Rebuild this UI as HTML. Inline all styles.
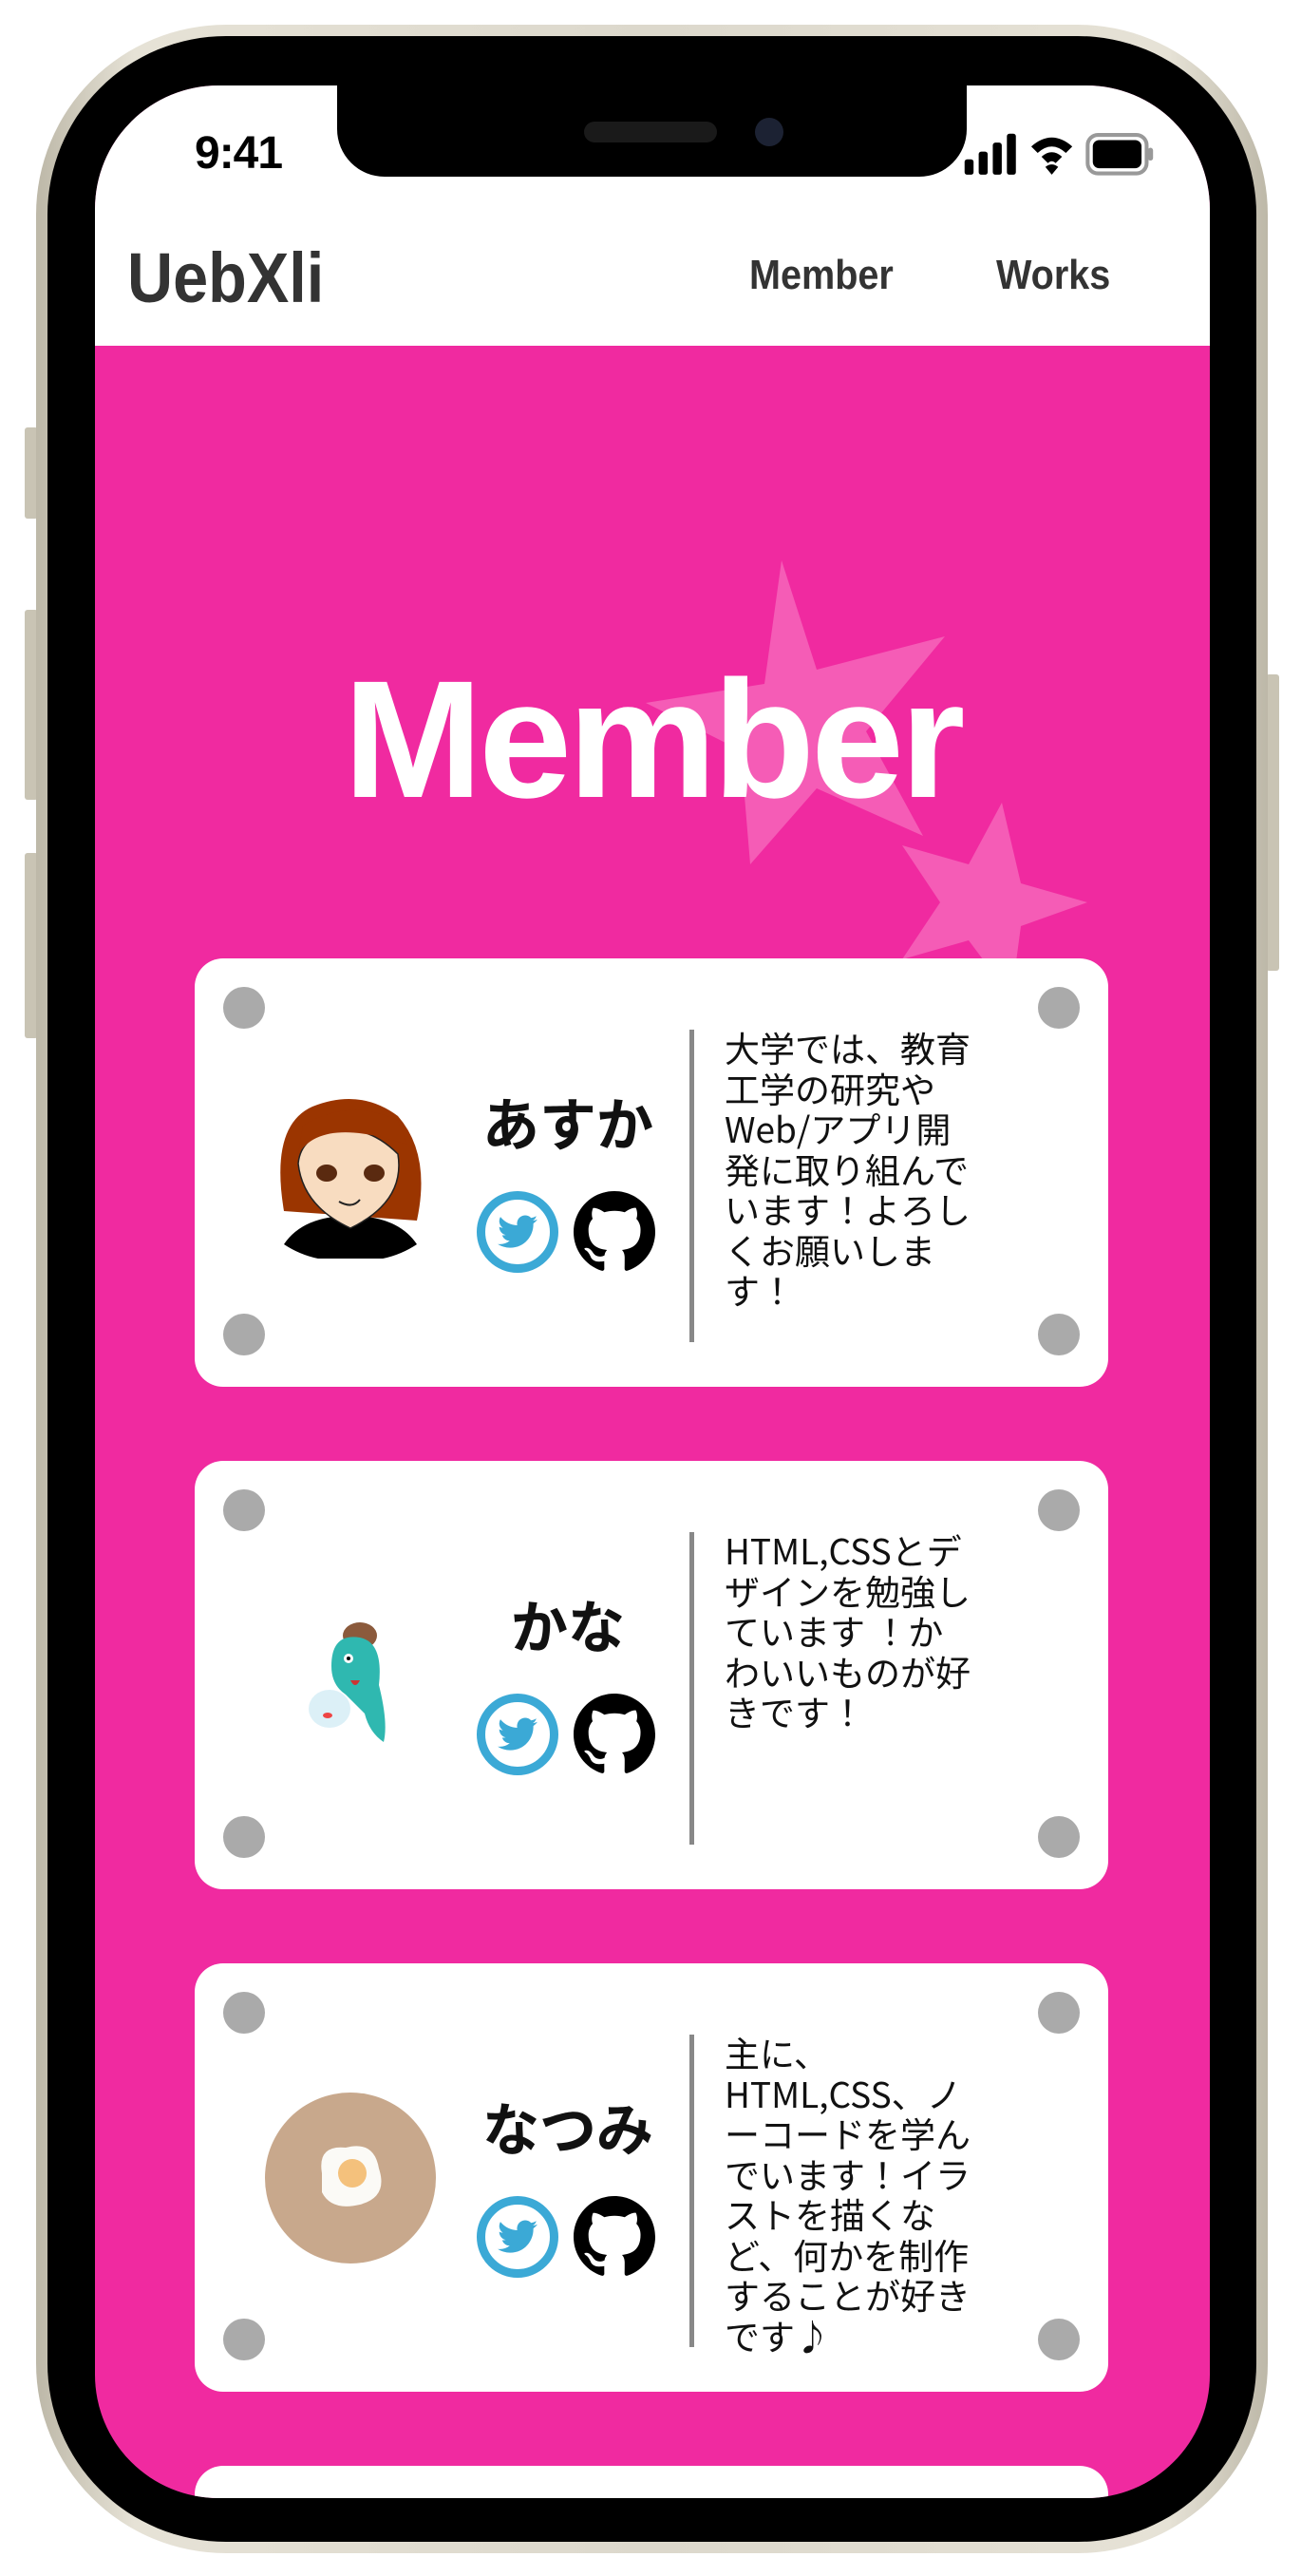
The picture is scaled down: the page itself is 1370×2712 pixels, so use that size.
<!DOCTYPE html>
<html><head><meta charset="utf-8">
<style>
*{margin:0;padding:0;box-sizing:border-box}
html,body{width:1370px;height:2712px;background:#fff;overflow:hidden;font-family:"Liberation Sans","Noto Sans CJK JP",sans-serif}
.frame{position:absolute;left:38px;top:26px;width:1297px;height:2662px;border-radius:200px;background:linear-gradient(90deg,#bdb8a8,#e6e2d6 8%,#dcd8cc 50%,#e6e2d6 92%,#bdb8a8);}
.bezel{position:absolute;left:50px;top:38px;width:1273px;height:2638px;border-radius:188px;background:#000}
.screen{position:absolute;left:100px;top:90px;width:1174px;height:2540px;border-radius:130px;overflow:hidden;background:#F02AA0}
.btn{position:absolute;background:#c9c4b4;border-radius:3px}
.header{position:absolute;left:0;top:0;width:1174px;height:274px;background:#fff}
.notch{position:absolute;left:255px;top:0;width:663px;height:96px;background:#000;border-radius:0 0 50px 50px}
.time{position:absolute;left:105px;top:44px;font-size:48px;font-weight:bold;color:#000;letter-spacing:-1px}
.logo{position:absolute;left:34px;top:160px;font-family:"Liberation Sans Narrow","Liberation Sans",sans-serif;font-weight:bold;font-size:74px;color:#333;transform:scaleX(.9);transform-origin:left}
.nav{position:absolute;top:175px;font-family:"Liberation Sans Narrow","Liberation Sans",sans-serif;font-weight:bold;font-size:44px;color:#333;transform:scaleX(.9);transform-origin:left}
.title{position:absolute;left:0;width:1174px;top:588px;text-align:center;font-size:176px;font-weight:bold;color:#fff;letter-spacing:-4px}
.card{position:absolute;left:105px;width:962px;height:451px;background:#fff;border-radius:30px}
.dot{position:absolute;width:44px;height:44px;border-radius:50%;background:#aaa}
.name{position:absolute;left:300px;width:186px;text-align:center;top:128px;font-size:60px;font-weight:bold;color:#111;font-family:"Noto Sans CJK JP",sans-serif}
.tw{position:absolute;left:297px;top:245px;width:86px;height:86px;border-radius:50%;border:9px solid #3BA9D6;display:flex;align-items:center;justify-content:center}
.gh{position:absolute;left:399px;top:245px;width:86px;height:86px}
.line{position:absolute;left:521px;top:75px;width:5px;height:329px;background:#888}
.txt{position:absolute;left:558px;top:72px;width:272px;font-size:37px;line-height:42.5px;color:#111;font-family:"Noto Sans CJK JP",sans-serif}
.av{position:absolute;left:74px;top:136px;width:180px;height:180px}
</style></head><body>
<div class="btn" style="left:26px;top:450px;width:14px;height:96px"></div>
<div class="btn" style="left:26px;top:642px;width:14px;height:200px"></div>
<div class="btn" style="left:26px;top:898px;width:14px;height:195px"></div>
<div class="btn" style="left:1333px;top:710px;width:14px;height:312px"></div>
<div class="frame"></div>
<div class="bezel"></div>
<div class="screen">
  <svg style="position:absolute;left:0;top:0" width="1174" height="1100">
    <polygon fill="#F55CB6" points="723,500 760,615 895,580 812,680 872,790 760,740 690,820 680,700 580,650 705,630" />
    <polygon fill="#F55CB6" points="955,755 975,840 1045,860 975,885 965,960 920,900 850,920 890,860 850,800 920,820" />
  </svg>
  <div class="header">
    <div class="time">9:41</div>
    <svg style="position:absolute;left:915px;top:48px" width="204" height="54" viewBox="0 0 150 40">
      <rect x="0" y="22" width="7" height="12" rx="2"/><rect x="11" y="16" width="7" height="18" rx="2"/><rect x="22" y="9" width="7" height="25" rx="2"/><rect x="33" y="2" width="7" height="32" rx="2"/>
      <path d="M52 12 Q68 -2 84 12 L79 17 Q68 7 57 17Z M60 20 Q68 13 76 20 L71 25 Q68 22 65 25Z M68 34 L63 28 Q68 24 73 28Z"/>
      <rect x="96" y="3" width="46" height="30" rx="8" fill="none" stroke="#999" stroke-width="3"/><rect x="100" y="7" width="38" height="22" rx="5"/><rect x="143" y="13" width="4" height="10" rx="2" fill="#999"/>
    </svg>
    <div class="notch"><div style="position:absolute;left:260px;top:38px;width:140px;height:22px;border-radius:11px;background:#1a1a1a"></div><div style="position:absolute;left:440px;top:34px;width:30px;height:30px;border-radius:50%;background:#1c2233"></div></div>
    <div class="logo">UebXli</div>
    <div class="nav" style="left:689px">Member</div>
    <div class="nav" style="left:949px">Works</div>
  </div>
  <div class="title">Member</div>

  <!-- card 1 -->
  <div class="card" style="top:919px">
    <div class="dot" style="left:30px;top:30px"></div><div class="dot" style="right:30px;top:30px"></div>
    <div class="dot" style="left:30px;bottom:33px"></div><div class="dot" style="right:30px;bottom:33px"></div>
    <svg class="av" viewBox="0 0 180 180">
      <path d="M20 130 Q5 40 50 20 Q100 0 140 30 Q175 70 160 140 Z" fill="#9B3500"/>
      <path d="M20 165 Q40 135 90 135 Q140 135 160 165 Q130 185 90 182 Q50 185 20 165Z" fill="#000"/>
      <path d="M35 80 Q38 50 75 45 Q110 40 140 70 Q148 120 90 148 Q40 125 35 80Z" fill="#F8DCC0" stroke="#222" stroke-width="1.5"/>
      <path d="M35 70 Q60 30 150 60 L140 35 Q90 10 40 40Z" fill="#9B3500"/>
      <ellipse cx="65" cy="90" rx="11" ry="9" fill="#5a2a10"/><ellipse cx="115" cy="90" rx="11" ry="9" fill="#5a2a10"/>
      <path d="M78 120 Q92 128 100 118" stroke="#222" fill="none" stroke-width="2"/>
    </svg>
    <div class="name">あすか</div>
    <div class="tw"><svg width="42" height="36" viewBox="0 0 24 20"><path fill="#3BA9D6" d="M24 2.4a10 10 0 0 1-2.8.8A5 5 0 0 0 23.3.4a10 10 0 0 1-3.1 1.2A4.9 4.9 0 0 0 11.8 6 14 14 0 0 1 1.7.9a4.9 4.9 0 0 0 1.5 6.6A4.9 4.9 0 0 1 1 6.9a4.9 4.9 0 0 0 3.9 4.9 4.9 4.9 0 0 1-2.2.1 4.9 4.9 0 0 0 4.6 3.4A9.9 9.9 0 0 1 0 17.3 14 14 0 0 0 7.5 19.5c9.1 0 14-7.5 14-14v-.6A10 10 0 0 0 24 2.4z"/></svg></div>
    <svg class="gh" viewBox="0 0 16 16"><path d="M8 0C3.58 0 0 3.58 0 8c0 3.540 2.29 6.53 5.47 7.59.4.07.55-.17.55-.38 0-.19-.01-.82-.01-1.49-2.01.37-2.53-.49-2.69-.94-.09-.23-.48-.94-.82-1.13-.28-.15-.68-.52-.01-.53.63-.01 1.08.58 1.23.82.72 1.21 1.87.87 2.33.66.07-.52.28-.87.51-1.07-1.78-.2-3.64-.89-3.64-3.95 0-.87.31-1.59.82-2.15-.08-.2-.36-1.02.08-2.12 0 0 .67-.21 2.2.82.64-.18 1.32-.27 2-.27.68 0 1.36.09 2 .27 1.53-1.04 2.2-.82 2.2-.82.44 1.1.16 1.92.08 2.12.51.56.82 1.27.82 2.15 0 3.07-1.87 3.75-3.65 3.95.29.25.54.73.54 1.48 0 1.07-.01 1.93-.01 2.2 0 .21.15.46.55.38A8.013 8.013 0 0016 8c0-4.42-3.58-8-8-8z"/></svg>
    <div class="line"></div>
    <div class="txt">大学では、教育工学の研究や<br>Web/アプリ開発に取り組んでいます！よろしくお願いします！</div>
  </div>

  <!-- card 2 -->
  <div class="card" style="top:1448px">
    <div class="dot" style="left:30px;top:30px"></div><div class="dot" style="right:30px;top:30px"></div>
    <div class="dot" style="left:30px;bottom:33px"></div><div class="dot" style="right:30px;bottom:33px"></div>
    <svg class="av" viewBox="0 0 180 180">
      <ellipse cx="100" cy="48" rx="18" ry="14" fill="#8B5A3C"/>
      <path d="M70 80 Q70 45 100 50 Q125 55 120 100 Q130 140 125 160 Q110 150 105 130 Q95 120 85 110 Q70 100 70 80Z" fill="#2FB8B0"/>
      <circle cx="88" cy="72" r="5" fill="#fff"/><circle cx="88" cy="72" r="2" fill="#000"/>
      <path d="M90 95 Q95 105 100 95" fill="#C33"/>
      <ellipse cx="68" cy="125" rx="22" ry="20" fill="#D8EEF6" opacity=".9"/>
      <ellipse cx="66" cy="132" rx="5" ry="3" fill="#E44"/>
    </svg>
    <div class="name">かな</div>
    <div class="tw"><svg width="42" height="36" viewBox="0 0 24 20"><path fill="#3BA9D6" d="M24 2.4a10 10 0 0 1-2.8.8A5 5 0 0 0 23.3.4a10 10 0 0 1-3.1 1.2A4.9 4.9 0 0 0 11.8 6 14 14 0 0 1 1.7.9a4.9 4.9 0 0 0 1.5 6.6A4.9 4.9 0 0 1 1 6.9a4.9 4.9 0 0 0 3.9 4.9 4.9 4.9 0 0 1-2.2.1 4.9 4.9 0 0 0 4.6 3.4A9.9 9.9 0 0 1 0 17.3 14 14 0 0 0 7.5 19.5c9.1 0 14-7.5 14-14v-.6A10 10 0 0 0 24 2.4z"/></svg></div>
    <svg class="gh" viewBox="0 0 16 16"><path d="M8 0C3.58 0 0 3.58 0 8c0 3.54 2.29 6.53 5.47 7.59.4.07.55-.17.55-.38 0-.19-.01-.82-.01-1.49-2.01.37-2.53-.49-2.69-.94-.09-.23-.48-.94-.82-1.13-.28-.15-.68-.52-.01-.53.63-.01 1.08.58 1.23.82.72 1.21 1.87.87 2.33.66.07-.52.28-.87.51-1.07-1.78-.2-3.64-.89-3.64-3.95 0-.87.31-1.59.82-2.15-.08-.2-.36-1.02.08-2.12 0 0 .67-.21 2.2.82.64-.18 1.32-.27 2-.27.68 0 1.36.09 2 .27 1.53-1.04 2.2-.82 2.2-.82.44 1.1.16 1.92.08 2.12.51.56.82 1.27.82 2.15 0 3.07-1.87 3.75-3.65 3.95.29.25.54.73.54 1.48 0 1.07-.01 1.93-.01 2.2 0 .21.15.46.55.38A8.013 8.013 0 0016 8c0-4.42-3.58-8-8-8z"/></svg>
    <div class="line"></div>
    <div class="txt">HTML,CSSとデザインを勉強しています ！か<br>わいいものが好きです！</div>
  </div>

  <!-- card 3 -->
  <div class="card" style="top:1977px">
    <div class="dot" style="left:30px;top:30px"></div><div class="dot" style="right:30px;top:30px"></div>
    <div class="dot" style="left:30px;bottom:33px"></div><div class="dot" style="right:30px;bottom:33px"></div>
    <svg class="av" viewBox="0 0 180 180">
      <circle cx="90" cy="90" r="90" fill="#C8A88C"/>
      <path d="M60 85 Q55 55 85 58 Q115 50 120 80 Q130 110 100 118 Q70 125 60 105Z" fill="#fbfaf6"/>
      <circle cx="92" cy="85" r="15" fill="#F4C17C"/>
    </svg>
    <div class="name">なつみ</div>
    <div class="tw"><svg width="42" height="36" viewBox="0 0 24 20"><path fill="#3BA9D6" d="M24 2.4a10 10 0 0 1-2.8.8A5 5 0 0 0 23.3.4a10 10 0 0 1-3.1 1.2A4.9 4.9 0 0 0 11.8 6 14 14 0 0 1 1.7.9a4.9 4.9 0 0 0 1.5 6.6A4.9 4.9 0 0 1 1 6.9a4.9 4.9 0 0 0 3.9 4.9 4.9 4.9 0 0 1-2.2.1 4.9 4.9 0 0 0 4.6 3.4A9.9 9.9 0 0 1 0 17.3 14 14 0 0 0 7.5 19.5c9.1 0 14-7.5 14-14v-.6A10 10 0 0 0 24 2.4z"/></svg></div>
    <svg class="gh" viewBox="0 0 16 16"><path d="M8 0C3.58 0 0 3.58 0 8c0 3.54 2.29 6.53 5.47 7.59.4.07.55-.17.55-.38 0-.19-.01-.82-.01-1.49-2.01.37-2.53-.49-2.69-.94-.09-.23-.48-.94-.82-1.13-.28-.15-.68-.52-.01-.53.63-.01 1.08.58 1.23.82.72 1.21 1.87.87 2.33.66.07-.52.28-.87.51-1.07-1.78-.2-3.64-.89-3.64-3.95 0-.87.31-1.59.82-2.15-.08-.2-.36-1.02.08-2.12 0 0 .67-.21 2.2.82.64-.18 1.32-.27 2-.27.68 0 1.36.09 2 .27 1.53-1.04 2.2-.82 2.2-.82.44 1.1.16 1.92.08 2.12.51.56.82 1.27.82 2.15 0 3.07-1.87 3.75-3.65 3.95.29.25.54.73.54 1.48 0 1.07-.01 1.93-.01 2.2 0 .21.15.46.55.38A8.013 8.013 0 0016 8c0-4.42-3.58-8-8-8z"/></svg>
    <div class="line"></div>
    <div class="txt">主に、<br>HTML,CSS、ノーコードを学んでいます！イラストを描くなど、何かを制作することが好きです♪</div>
  </div>

  <div class="card" style="top:2506px"></div>
</div>
</body></html>
